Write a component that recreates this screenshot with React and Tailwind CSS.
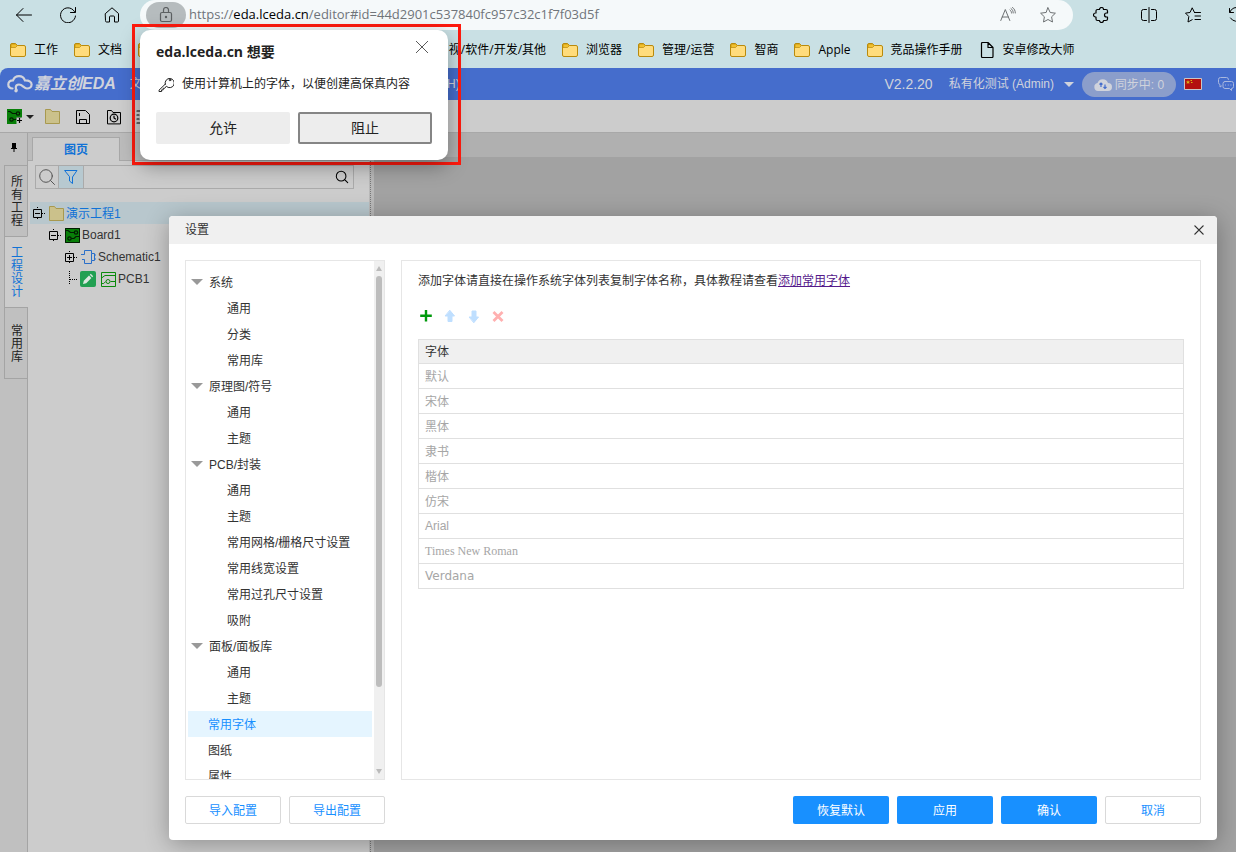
import React, { useState } from 'react';

const BOOKMARKS = ['浏览器', '管理/运营', '智商', 'Apple', '竞品操作手册'];

const SETTINGS = [
  { label: '系统', children: ['通用', '分类', '常用库'] },
  { label: '原理图/符号', children: ['通用', '主题'] },
  {
    label: 'PCB/封装',
    children: ['通用', '主题', '常用网格/栅格尺寸设置', '常用线宽设置', '常用过孔尺寸设置', '吸附'],
  },
  { label: '面板/面板库', children: ['通用', '主题'] },
  { label: '常用字体' },
  { label: '图纸' },
  { label: '属性' },
];

const FONTS = [
  { name: '默认', cls: 'pt-0.5' },
  { name: '宋体', cls: 'pt-0.5' },
  { name: '黑体', cls: 'pt-0.5' },
  { name: '隶书', cls: 'pt-0.5' },
  { name: '楷体', cls: 'pt-0.5' },
  { name: '仿宋', cls: 'pt-0.5' },
  { name: 'Arial' },
  { name: 'Times New Roman', cls: "font-['Liberation_Serif','Noto_Sans_CJK_SC',serif]" },
  { name: 'Verdana', cls: "font-['DejaVu_Sans','Noto_Sans_CJK_SC',sans-serif]" },
];

// Thin line icon on a 16px grid
function Line({ children, size = 'size-4', width = 1, className = '' }) {
  return (
    <svg
      viewBox="0 0 16 16"
      fill="none"
      stroke="currentColor"
      strokeWidth={width}
      strokeLinecap="round"
      strokeLinejoin="round"
      className={`${size} shrink-0 ${className}`}
    >
      {children}
    </svg>
  );
}

function BookmarkFolder() {
  return (
    <svg viewBox="0 0 16 14" className="h-3.5 w-4 shrink-0">
      <path d="M.5 2A1.5 1.5 0 0 1 2 .5h3.5L7.5 2.5H14A1.5 1.5 0 0 1 15.500 4v8a1.500 1.500 0 0 1-1.500 1.500H2A1.500 1.500 0 0 1 .5 12z" fill="#ffdc7c" stroke="#b98a0c" />
      <path d="M1 4.500h4.500l2-2L5.300 1H2a1 1 0 0 0-1 1z" fill="#f2c12e" stroke="#b98a0c" strokeWidth=".7" />
    </svg>
  );
}

function ProjectFolder({ className = '' }) {
  return (
    <svg viewBox="0 0 15 15" className={`size-[15px] shrink-0 ${className}`}>
      <path d="M.5 14.500V.5h5l1.500 2h7.500v12z" fill="#cbc18b" stroke="#a8994f" />
    </svg>
  );
}

function BoardIcon({ plus }) {
  return (
    <svg viewBox="0 0 15 15" className="size-[15px] shrink-0">
      <path d="M0 0h15v15H0z" fill="#087f08" />
      {!plus && <path d="M.5.5h14v14H.5z" fill="none" stroke="#021d02" />}
      <g fill="none" stroke="#021d02" strokeWidth="1.200">
        <circle cx="11" cy="4.500" r="1.700" />
        <circle cx="4.500" cy="10.500" r="1.700" />
        <path d="M1 2.500h2l2.500 2h3.700M6.200 10.500H9l2-2h3" />
      </g>
      {plus && (
        <>
          <path d="M9.500 8.500H15V15H9.500z" fill="#ccc" />
          <path d="M12.500 9v5M10 11.500h5" stroke="#000" strokeWidth="1.200" />
        </>
      )}
    </svg>
  );
}

function BrowserBar() {
  return (
    <div className="flex h-[30px] items-center overflow-hidden pl-4 text-black">
      <button aria-label="后退"><Line><path d="M15.500 8H.5M7 1.500.5 8 7 14.500" /></Line></button>
      <button aria-label="刷新" className="ml-7"><Line><path d="M15 5.500A7.500 7.500 0 1 0 15.500 9M15.500.5v5h-5" /></Line></button>
      <button aria-label="主页" className="ml-7">
        <Line><path d="M1.500 6.500 8 .8l6.500 5.700v7.500a1 1 0 0 1-1 1h-3V10a1 1 0 0 0-1-1h-3a1 1 0 0 0-1 1v5h-3a1 1 0 0 1-1-1z" /></Line>
      </button>
      <div className="ml-5 flex h-[30px] min-w-0 flex-1 items-center rounded-full bg-[#f5f9fa] pr-[17px] pl-1.5">
        <button aria-label="站点信息" className="flex h-[26px] w-10 shrink-0 items-center justify-center rounded-full bg-[#b6bcbe] text-[#5c6062]">
          <Line width={1.2}>
            <rect x="2.500" y="5.500" width="11" height="9" rx="1.500" />
            <path d="M5.500 5.500V3a2.500 2.500 0 0 1 5 0v2.500" />
            <circle cx="8" cy="10" r=".6" fill="currentColor" />
          </Line>
        </button>
        <span className="ml-[3px] min-w-0 flex-1 truncate font-['Open_Sans','Noto_Sans_CJK_SC',sans-serif] text-[13px] text-[#70757a]">
          https://<span className="text-black">eda.lceda.cn</span>/editor#id=44d2901c537840fc957c32c1f7f03d5f
        </span>
        <button aria-label="朗读此页内容" className="text-[#6d7173]">
          <Line><path d="m.8 13.500 4.500-11 4.500 11M2.200 10h6.200M10 3c1 .7 1.500 1.800 1.500 3M11 1.500c1.500 1 2.200 2.500 2.200 4.500M12.500.5c2 1.300 2.800 3.200 2.800 5.500" /></Line>
        </button>
        <button aria-label="收藏" className="ml-6 text-[#6d7173]">
          <Line><path d="m8 .8 2.200 4.700 5.200.7-3.800 3.600.9 5.200L8 12.500 3.500 15l.9-5.200L.6 6.200l5.200-.7z" /></Line>
        </button>
      </div>
      <div className="flex w-[163px] shrink-0 items-center pl-5">
        <button aria-label="扩展">
          <Line width={1.2}><path d="M4.500 2.500h2a2 2 0 0 1 4 0h2.500a1.500 1.500 0 0 1 1.500 1.500v2h-1a2 2 0 0 0 0 4h1v2a1.500 1.500 0 0 1-1.500 1.500h-2.500a2 2 0 0 1-4 0h-2A1.500 1.500 0 0 1 3 12v-2H2.500a2 2 0 0 1 0-4H3V4a1.500 1.500 0 0 1 1.500-1.500z" /></Line>
        </button>
        <span className="ml-4 h-4 w-px bg-[#9aa9ac]" />
        <button aria-label="分屏" className="ml-4"><Line><path d="M5.500 2.500h-3a2 2 0 0 0-2 2v7a2 2 0 0 0 2 2h3M10.500 2.500h3a2 2 0 0 1 2 2v7a2 2 0 0 1-2 2h-3M8 .5v15" /></Line></button>
        <button aria-label="收藏夹" className="ml-7"><Line><path d="M9.500 5.500 7.200.8 5 5.500l-4.500.6 3.300 3.400-.8 5.500 4.200-2.300M9.500 5.500h6M10 9h5.500M10 12.500h5.500" /></Line></button>
        <button aria-label="历史记录" className="ml-7"><Line><path d="M.5 1.500v4h4M.8 5.300A7 7 0 1 1 1.500 11" /></Line></button>
      </div>
    </div>
  );
}

function BookmarkBar() {
  return (
    <nav className="flex h-[38px] items-center gap-4 overflow-hidden pt-0.5 pl-2.5 font-['Open_Sans','Noto_Sans_CJK_SC',sans-serif] text-xs whitespace-nowrap text-black">
      <a href="#work" className="flex items-center gap-2"><BookmarkFolder />工作</a>
      <a href="#docs" className="flex items-center gap-2"><BookmarkFolder />文档</a>
      <a href="#media" className="flex w-[408px] shrink-0 items-center justify-between"><BookmarkFolder />视/软件/开发/其他</a>
      {BOOKMARKS.map((name) => (
        <a key={name} href={`#${name}`} className="flex items-center gap-2"><BookmarkFolder />{name}</a>
      ))}
      <a href="#android" className="flex items-center gap-2">
        <Line width={1.2}><path d="M2.500 1.500a1 1 0 0 1 1-1H9l5 5v9a1 1 0 0 1-1 1H3.500a1 1 0 0 1-1-1zM9 .5v5h5" /></Line>
        安卓修改大师
      </a>
    </nav>
  );
}

function AppHeader() {
  return (
    <header className="flex h-8 items-center overflow-hidden rounded-tl-lg bg-[#456dcc] pl-[7px] text-xs whitespace-nowrap text-[#d0d3dc]">
      <svg viewBox="0 0 26 18" className="h-[18px] w-[26px] shrink-0" fill="none" stroke="currentColor" strokeWidth="2.200" strokeLinecap="round">
        <path d="M5.500 13.500C2.800 13.200 1.300 11.500 1.300 9.400 1.300 7 3.300 5.300 6 5.300 7 2.700 9.300 1.200 12 1.200c3 0 5 1.600 5.900 4.100 4-.2 6.700 1.600 6.700 4.200 0 2.500-2.200 4-4.600 4-3.200 0-4.300-4-8-4-1.900 0-3.200 1.300-3.200 2.900 0 1.200.3 2 .8 2.600" />
        <circle cx="9" cy="15.800" r="1.700" fill="currentColor" stroke="none" />
      </svg>
      <span className="ml-px text-base font-bold italic">嘉立创EDA</span>
      <div className="ml-3.5 flex w-[330px] shrink-0 justify-between">
        <button>文件</button>
        <button>(H)</button>
      </div>
      <span className="flex-1" />
      <span className="text-sm">V2.2.20</span>
      <button className="ml-4 flex items-center gap-2.5">
        私有化测试 (Admin)
        <svg viewBox="0 0 10 5" className="h-[5px] w-2.5"><path d="M0 0h10L5 5z" fill="currentColor" /></svg>
      </button>
      <button className="ml-2 flex h-[25px] w-[94px] shrink-0 items-center justify-center gap-[3px] rounded-full bg-[#8b9ecb]">
        <svg viewBox="0 0 18 13" className="h-[13px] w-[18px]">
          <path d="M4 13a4 4 0 0 1-.5-7.900A5.500 5.500 0 0 1 14 5a4 4 0 0 1 0 8z" fill="currentColor" />
          <path d="M7 9V5M5.500 6.500 7 5l1.500 1.500M11 6.500v4M9.500 9l1.500 1.500L12.500 9" fill="none" stroke="#456dcc" strokeWidth="1.200" />
        </svg>
        <span className="pt-0.5">同步中: 0</span>
      </button>
      <svg viewBox="0 0 18 12" className="ml-2 h-3 w-[18px] shrink-0">
        <path d="M.5.5h17v11H.5z" fill="#b3100f" stroke="#cbc6c4" />
        <path d="m4 2 .6 1.400h1.400L5 4.500l.4 1.400L4 5l-1.400.9.400-1.400-1-1.100h1.400zM6.500 2h1.500v1H6.500zM7 4h1.500v1H7z" fill="#d8b311" />
      </svg>
      <button aria-label="消息" className="mr-0.5 ml-4">
        <Line className="text-[#a9b8df]">
          <path d="M3.500 10l-1.500 1V8.500a2 2 0 0 1-1.500-2v-3a2 2 0 0 1 2-2h6a2 2 0 0 1 2 2M7 5.500h6.500a2 2 0 0 1 2 2v3a2 2 0 0 1-2 2v2l-2-2H7a2 2 0 0 1-2-2v-3a2 2 0 0 1 2-2zM7.500 9h.1M10.200 9h.1M12.900 9h.1" />
        </Line>
      </button>
    </header>
  );
}

function Toolbar() {
  return (
    <div className="flex h-[33px] items-center border-b border-[#a8a8a8] bg-[#ccc] pt-px pl-[7px] text-black">
      <button aria-label="新建" className="flex items-center gap-1">
        <BoardIcon plus />
        <svg viewBox="0 0 8 4" className="h-1 w-2"><path d="M0 0h8L4 4z" fill="#222" /></svg>
      </button>
      <button aria-label="打开" className="ml-[11px]"><ProjectFolder /></button>
      <button aria-label="保存" className="ml-[15px]"><Line><path d="M1.500 1.500h9l4 4v9h-13zM4.500 14.500v-4h7v4M4.500 4v3" strokeLinecap="butt" /></Line></button>
      <button aria-label="历史" className="ml-[15px]">
        <Line><path d="M1.500 14.500v-13h4l1.500 2h7.500v11z" /><circle cx="8" cy="9" r="3.800" strokeWidth="1.200" /><path d="M8 7v2l1.500 1" strokeWidth="1.200" /></Line>
      </button>
      <button aria-label="列表" className="ml-3.5"><Line width={1.2}><path d="M1 2h14M1 6h2M1 10h2M1 14h14" /></Line></button>
    </div>
  );
}

function SideTabs() {
  const [active, setActive] = useState('工程设计');
  return (
    <aside className="flex w-7 shrink-0 flex-col border-r border-[#a4a4a4] bg-[#c0c0c0] pl-1">
      <button aria-label="固定" className="flex h-8 items-center justify-center pr-1 pb-1">
        <svg viewBox="0 0 6 9" className="h-[9px] w-1.5"><path d="M1 0h4v5h1v1H3.500v3h-1V6H0V5h1z" fill="#000" /></svg>
      </button>
      {['所有工程', '工程设计', '常用库'].map((tab) => (
        <button
          key={tab}
          onClick={() => setActive(tab)}
          className={`-mr-px flex h-[72px] items-center justify-center border border-[#a4a4a4] pt-0.5 pl-0.5 text-xs leading-[13px] not-first:-mb-px ${
            tab === active ? 'border-r-[#ccc] bg-[#ccc] text-[#1172d6]' : 'text-[#222]'
          }`}
        >
          <span className="w-3 break-all">{tab}</span>
        </button>
      ))}
    </aside>
  );
}

function Expander({ open }) {
  return (
    <svg viewBox="0 0 13 13" className="size-[13px] shrink-0" fill="none" stroke="#000">
      <path d="M1.500 2.500h8v8h-8zM3 6.500h5" />
      {!open && <path d="M5.500 4v5" />}
      <path d="M5.500 0v2M5.500 11v2M10 6.500h3" strokeDasharray="1 1" />
    </svg>
  );
}

function ProjectPanel() {
  return (
    <section className="flex w-[341px] shrink-0 flex-col bg-[#ccc] text-xs text-[#333]">
      <div className="flex h-7 items-end border-b border-[#a8a8a8] bg-[#bcbcbc] pl-1">
        <button className="-mb-px h-6 w-[88px] border border-b-0 border-[#a8a8a8] bg-[#ccc] font-bold text-[#1172d6]">图页</button>
      </div>
      <div className="mt-1 mr-[15px] ml-[7px] flex h-6 items-center border border-[#aaa]">
        <button aria-label="搜索范围" className="flex h-full w-[23px] items-center justify-center border-r border-[#aaa] text-[#555]">
          <Line><circle cx="7" cy="7" r="6.300" /><path d="m11.500 11.500 4 4" /></Line>
        </button>
        <button aria-label="筛选" className="flex h-full w-[25px] items-center justify-center border-r border-[#aaa] bg-[#b7c9d0] text-[#1172d6]">
          <Line><path d="M2 1.500h12L9.500 8v6.500L6.500 12V8z" /></Line>
        </button>
        <input aria-label="搜索工程" className="h-full min-w-0 flex-1 bg-transparent px-1 outline-none" />
        <button aria-label="搜索" className="mr-1 text-black">
          <Line size="size-3.5" width={1.2}><circle cx="7" cy="7" r="5.500" /><path d="m11 11 3.500 3.500" /></Line>
        </button>
      </div>
      <ul className="mt-[13px] ml-0.5">
        <li className="flex h-[22px] items-center bg-[#b8c7cd] pl-0.5 text-[#1172d6]">
          <Expander open /><ProjectFolder className="mr-0.5 ml-1" /><span className="pt-0.5">演示工程1</span>
        </li>
        <li className="flex h-[22px] items-center pl-[18px]">
          <Expander open /><span className="mr-0.5 ml-1"><BoardIcon /></span>Board1
        </li>
        <li className="flex h-[22px] items-center pl-[34px]">
          <Expander />
          <svg viewBox="0 0 16 16" className="mr-px ml-1 size-4" fill="none" stroke="#2a6fc9">
            <path d="M3.500 4.500v-3h7v3M3.500 11.500v3h7v-3M10.500 4.500h3v7h-3zM0 5.500h3.500V4M1 10.500h2.500V12M13.500 6h1.500M13.500 10h1.500" />
          </svg>
          Schematic1
        </li>
        <li className="flex h-[22px] items-center pl-[39px]">
          <svg viewBox="0 0 9 22" className="h-[22px] w-[9px]" fill="none" stroke="#000"><path d="M.5 3v14M1 11.500h8" strokeDasharray="1 1" /></svg>
          <svg viewBox="0 0 16 16" className="ml-0.5 size-4">
            <rect width="16" height="16" rx="2" fill="#22a052" />
            <path d="m3 13 .8-3.200L9 4.600l2.400 2.400-5.200 5.200zM9.800 3.800l1-1 2.400 2.400-1 1z" fill="#dce8e0" />
          </svg>
          <svg viewBox="0 0 15 15" className="mr-0.5 ml-[5px] size-[15px]" fill="none" stroke="#0a8a0a">
            <path d="M.5.500h14v14H.5zM.5 6l3.500-2.500h10.500M.5 11.500h2.200l2-2M9.500 9.500h5" /><circle cx="7" cy="9.500" r="2" />
          </svg>
          PCB1
        </li>
      </ul>
    </section>
  );
}

function SettingsTree() {
  const [selected, setSelected] = useState('常用字体');
  return (
    <div className="flex w-[200px] shrink-0 overflow-hidden border border-[#e6e6e6]">
      <div className="min-w-0 flex-1 overflow-y-auto px-0.5 pt-2 [scrollbar-width:none]">
        {SETTINGS.map((group) => (
          <div key={group.label}>
            <button
              onClick={() => setSelected(group.label)}
              className={`flex h-[26px] w-full items-center ${selected === group.label ? 'bg-[#e5f5ff] text-[#1890ff]' : ''} ${
                group.children ? 'gap-1.5 pl-[3px]' : 'pl-5'
              }`}
            >
              {group.children && (
                <svg viewBox="0 0 12 6" className="h-1.5 w-3"><path d="M0 0h12L6 6z" fill="#999" /></svg>
              )}
              <span className="pt-0.5">{group.label}</span>
            </button>
            {group.children?.map((child) => (
              <button key={child} className="flex h-[26px] w-full items-center pt-0.5 pl-[39px]">{child}</button>
            ))}
          </div>
        ))}
      </div>
      <div className="flex w-2.5 flex-col items-center bg-[#f0f0f0] py-[5px]">
        <svg viewBox="0 0 6 5" className="h-[5px] w-1.5"><path d="M3 0l3 5H0z" fill="#bbb" /></svg>
        <div className="mt-[5px] h-[81%] w-1.5 rounded-full bg-[#bdbdbd]" />
        <svg viewBox="0 0 6 5" className="mt-auto h-[5px] w-1.5"><path d="M3 5l3-5H0z" fill="#bbb" /></svg>
      </div>
    </div>
  );
}

function FontSettings() {
  return (
    <div className="min-w-0 flex-1 overflow-hidden border border-[#e6e6e6] px-4 pt-[11px]">
      <p className="leading-[18px]">
        添加字体请直接在操作系统字体列表复制字体名称，具体教程请查看
        <a href="#fonts" className="text-[#551a8b] underline">添加常用字体</a>
      </p>
      <div className="mt-[18px] flex h-4 items-center gap-2">
        <button aria-label="添加"><Line width={2.4} className="text-[#009a0c]"><path d="M8 2v11.500M2.200 7.800h11.600" strokeLinecap="butt" /></Line></button>
        <button aria-label="上移"><Line className="text-[#bfdfff]"><path d="M8 2.500 12.500 8H10v5.500H6V8H3.500z" fill="currentColor" /></Line></button>
        <button aria-label="下移"><Line className="text-[#bfdfff]"><path d="M8 14.500 12.500 9H10V3H6v6H3.500z" fill="currentColor" /></Line></button>
        <button aria-label="删除"><Line width={2.8} className="text-[#ffb0b0]"><path d="m3.500 4 9 9M12.500 4l-9 9" strokeLinecap="butt" /></Line></button>
      </div>
      <table className="mt-[15px] w-full border-collapse border border-[#e0e0e0] text-left">
        <thead>
          <tr className="h-6 border-b border-[#e0e0e0] bg-[#f0f0f0]"><th className="px-1.5 font-normal">字体</th></tr>
        </thead>
        <tbody className="text-[#a6a6a6]">
          {FONTS.map((font) => (
            <tr key={font.name} className="h-[25px] border-b border-[#e0e0e0]">
              <td className={`px-1.5 ${font.cls || ''}`}>{font.name}</td>
            </tr>
          ))}
        </tbody>
      </table>
    </div>
  );
}

function SettingsDialog() {
  const plain = 'h-7 w-24 rounded-xs border border-[#d9d9d9] bg-white pt-0.5 text-[#1890ff]';
  const primary = 'h-7 w-24 rounded-xs bg-[#1890ff] pt-0.5 text-white';
  return (
    <div
      role="dialog"
      aria-label="设置"
      className="absolute top-[216px] right-[19px] bottom-3 left-[169px] flex flex-col overflow-hidden rounded bg-white text-xs text-[#333] shadow-[0_4px_24px_rgba(0,0,0,0.3)]"
    >
      <div className="flex h-7 shrink-0 items-center justify-between bg-[#f0f0f0] pr-3 pl-4">
        <h2>设置</h2>
        <button aria-label="关闭"><Line size="size-3" width={1.8}><path d="m2.500 2.500 11 11M13.500 2.500l-11 11" /></Line></button>
      </div>
      <div className="flex min-h-0 flex-1 gap-4 px-4 pt-4">
        <SettingsTree />
        <FontSettings />
      </div>
      <div className="flex shrink-0 gap-2 p-4">
        <button className={plain}>导入配置</button>
        <button className={plain}>导出配置</button>
        <span className="flex-1" />
        <button className={primary}>恢复默认</button>
        <button className={primary}>应用</button>
        <button className={primary}>确认</button>
        <button className={plain}>取消</button>
      </div>
    </div>
  );
}

function PermissionPrompt() {
  return (
    <div className="absolute top-6 left-[132px] border-3 border-[#ff1a0e] pt-[3px] pr-2.5 pb-0.5 pl-[5px]">
      <div
        role="alertdialog"
        aria-label="权限请求"
        className="w-[308px] rounded-[10px] bg-white px-4 pt-2.5 pb-4 font-['Open_Sans','Noto_Sans_CJK_SC',sans-serif] text-[#222] shadow-[0_6px_20px_rgba(0,0,0,0.35)]"
      >
        <div className="flex items-start justify-between">
          <h2 className="text-sm leading-6 font-bold">eda.lceda.cn 想要</h2>
          <button aria-label="关闭" className="mt-px mr-1"><Line size="size-3"><path d="m0 0 16 16M16 0 0 16" /></Line></button>
        </div>
        <p className="mt-2.5 flex items-center gap-2 text-xs leading-5">
          <Line className="ml-0.5">
            <path d="M7.200 8.200 1 14.200v1.300h2.600v-1.600h1.600v-1.600h1.500l1.600-2.100a4.600 4.600 0 1 0-1.100-2z" />
            <circle cx="12" cy="4" r=".8" />
          </Line>
          使用计算机上的字体，以便创建高保真内容
        </p>
        <div className="mt-[18px] grid grid-cols-2 gap-2 text-sm">
          <button className="h-8 rounded-xs bg-[#ededed]">允许</button>
          <button className="h-8 rounded-xs border-2 border-[#858585] bg-[#ededed]">阻止</button>
        </div>
      </div>
    </div>
  );
}

export default function App() {
  return (
    <div className="relative flex h-screen min-h-[600px] flex-col overflow-hidden bg-[#c9e0e4] font-['Liberation_Sans','Noto_Sans_CJK_SC',sans-serif]">
      <BrowserBar />
      <BookmarkBar />
      <AppHeader />
      <Toolbar />
      <main className="flex min-h-0 flex-1">
        <SideTabs />
        <ProjectPanel />
        <div className="w-[5px] shrink-0 bg-[#b8b8b8] pl-px">
          <div className="h-full w-0 border-l border-dotted border-[#777]" />
        </div>
        <div className="min-w-0 flex-1 bg-[#a2a2a2]">
          <div className="h-6 bg-[#b0b0b0]" />
        </div>
      </main>
      <SettingsDialog />
      <PermissionPrompt />
    </div>
  );
}
